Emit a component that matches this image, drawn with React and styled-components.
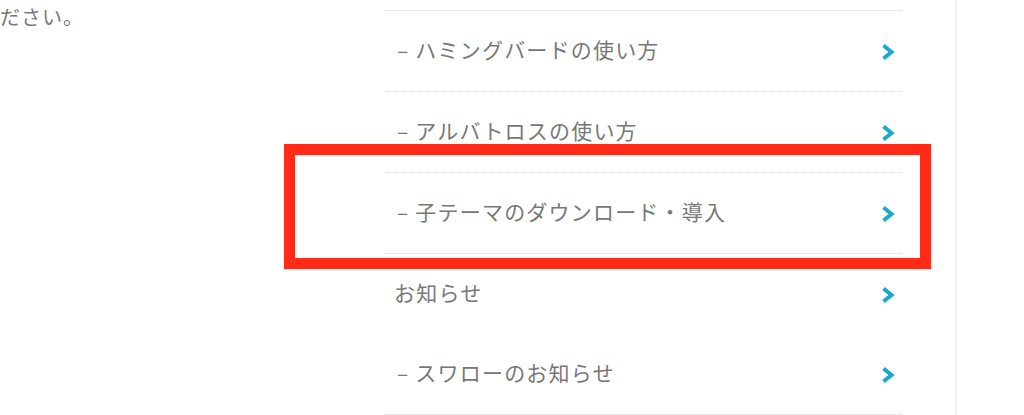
import React from "react";
import styled, { createGlobalStyle } from "styled-components";

const GlobalStyle = createGlobalStyle`
  html, body {
    margin: 0;
    padding: 0;
    background: #fff;
  }
  body {
    font-family: "Noto Sans CJK JP", "Noto Sans", sans-serif;
    color: #777;
  }
`;

const Page = styled.div`
  display: flex;
  width: 1024px;
  height: 415px;
  overflow: hidden;
`;

const Main = styled.div`
  width: 385px;
  flex-shrink: 0;
`;

const Lead = styled.p`
  margin: 0;
  font-size: 20px;
  line-height: 34px;
  letter-spacing: 1px;
  color: #777;
`;

const Sidebar = styled.div`
  width: 570px;
  flex-shrink: 0;
  border-right: 2px solid #f1f1f1;
`;

const Menu = styled.ul`
  list-style: none;
  margin: 10px 0 0;
  padding: 0;
  width: 517px;
  border-top: 1px dotted #d6d6d6;
`;

const Item = styled.li`
  position: relative;
  height: 80px;
  display: flex;
  align-items: center;
  justify-content: space-between;
  padding: 0 6px 0 ${({ $child }) => ($child ? "12px" : "9px")};
  border-bottom: 1px ${({ $last }) => ($last ? "none" : "dotted #d6d6d6")};
  font-size: 21px;
  letter-spacing: 1.2px;
  color: #777;
`;

const Label = styled.span`
  white-space: nowrap;
  margin-bottom: 4px;
`;

const Highlight = styled.div`
  position: absolute;
  top: -29px;
  bottom: -16px;
  left: -101px;
  right: -29px;
  border: 11px solid #ff2a17;
  pointer-events: none;
`;

const Chevron = () => (
  <svg width="16" height="18" viewBox="0 0 16 18" style={{ marginTop: 2 }}>
    <polyline
      points="3.5,2.5 11.5,9 3.5,15.5"
      fill="none"
      stroke="#1aaacb"
      strokeWidth="4"
      strokeLinejoin="miter"
    />
  </svg>
);

const items = [
  { label: "– ハミングバードの使い方", child: true },
  { label: "– アルバトロスの使い方", child: true },
  { label: "– 子テーマのダウンロード・導入", child: true, marked: true },
  { label: "お知らせ", last: true },
  { label: "– スワローのお知らせ", child: true },
];

export default function App() {
  return (
    <Page>
      <GlobalStyle />
      <Main>
        <Lead>ださい。</Lead>
      </Main>
      <Sidebar>
        <Menu>
          {items.map((it) => (
            <Item key={it.label} $child={it.child} $last={it.last}>
              <Label>{it.label}</Label>
              <Chevron />
              {it.marked && <Highlight />}
            </Item>
          ))}
        </Menu>
      </Sidebar>
    </Page>
  );
}
